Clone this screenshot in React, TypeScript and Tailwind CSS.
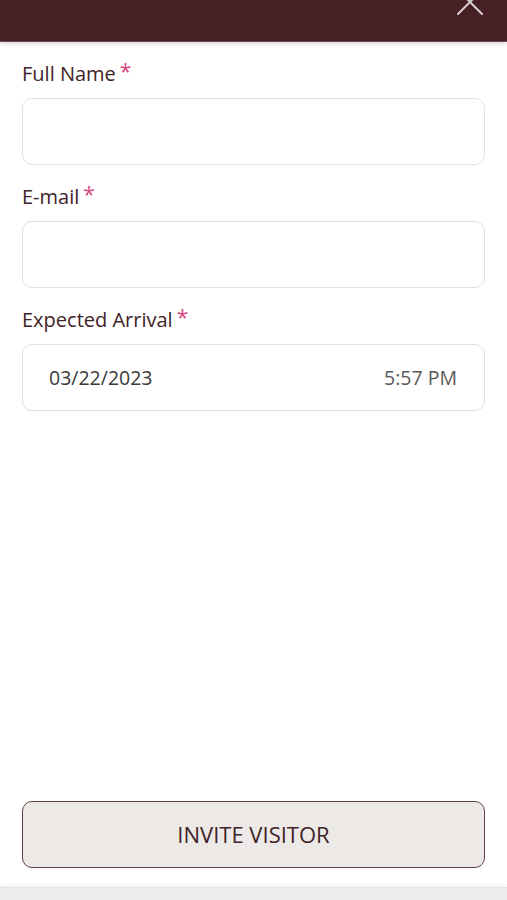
const Label = ({ text }: { text: string }) => (
  <label className="text-[20px] leading-[24px] text-[#3e2328] flex items-start">
    {text}
    <span className="text-[#d9457c] text-[21px] leading-[18px] ml-[4px]">*</span>
  </label>
);

const Field = ({ label }: { label: string }) => (
  <div className="flex flex-col">
    <Label text={label} />
    <div className="mt-[12px] h-[67px] rounded-[10px] border border-[#e2e0df] bg-white" />
  </div>
);

const App = () => {
  return (
    <div className="w-[507px] h-[900px] bg-white flex flex-col overflow-hidden" style={{ fontFamily: '"Open Sans", "Noto Sans", sans-serif' }}>
      <header className="h-[42px] shrink-0 bg-[#472025] border-b border-[#6e4a4f] shadow-[0_2px_4px_rgba(0,0,0,0.15)] flex justify-end pr-[22px]">
        <svg width="30" height="30" viewBox="0 0 30 30" className="-mt-[13px]">
          <path d="M3 3 L27 27 M27 3 L3 27" stroke="#d6cfd0" strokeWidth="2" strokeLinecap="round" />
        </svg>
      </header>

      <main className="flex-1 flex flex-col px-[22px] pt-[20px]">
        <div className="flex flex-col gap-[20px]">
          <Field label="Full Name" />
          <Field label="E-mail" />
          <div className="flex flex-col">
            <Label text="Expected Arrival" />
            <div className="mt-[12px] h-[67px] rounded-[10px] border border-[#e2e0df] bg-white flex items-center justify-between pl-[26px] pr-[27px] text-[19.5px]">
              <span className="text-[#3a3a3a]">03/22/2023</span>
              <span className="text-[#5a5a5a]">5:57 PM</span>
            </div>
          </div>
        </div>

        <div className="flex-1" />

        <button className="h-[67px] mb-[19px] rounded-[10px] border-[1.5px] border-[#5e4247] bg-[#ece9e6] text-[22px] text-[#3e2328] font-medium">
          INVITE VISITOR
        </button>
      </main>

      <footer className="h-[13px] shrink-0 bg-[#efedeb] shadow-[0_-2px_4px_rgba(0,0,0,0.06)] border-t border-[#e6e4e2]" />
    </div>
  );
};

export default App;
